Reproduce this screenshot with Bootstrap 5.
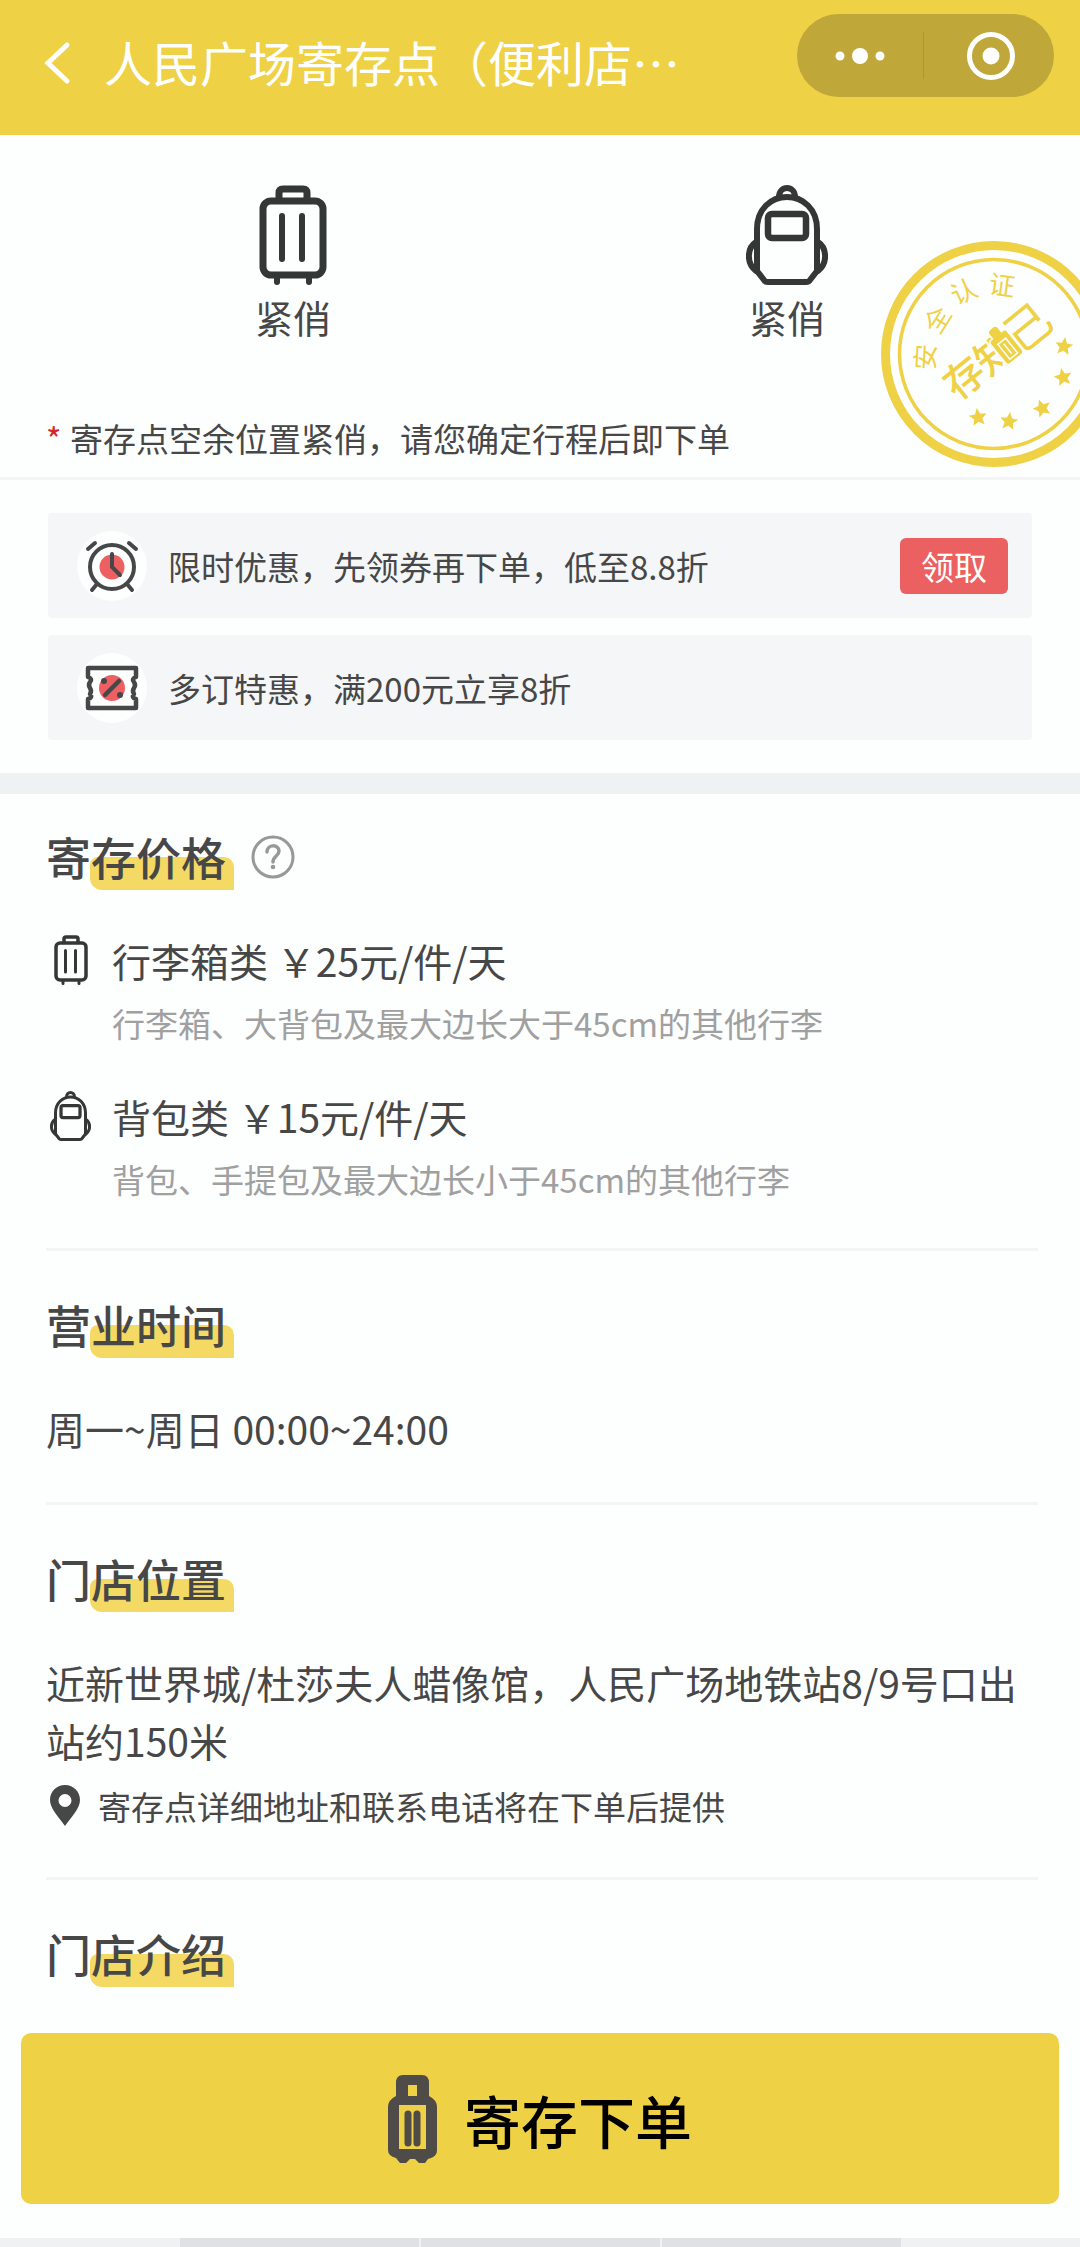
<!DOCTYPE html>
<html lang="zh-CN">
<head>
<meta charset="utf-8">
<meta name="viewport" content="width=device-width, initial-scale=1">
<title>人民广场寄存点</title>
<link rel="stylesheet" href="https://cdn.jsdelivr.net/npm/bootstrap@5.3.0/dist/css/bootstrap.min.css">
<style>
  :root { --brand: #efd145; --ink: #474747; --line: #f3f5f5; }
  body { font-family: "Noto Sans CJK SC", sans-serif; color: var(--ink); background: #fdfefe; font-size: 33px; line-height: 48px; overflow-x: hidden; }
  .topbar { background: var(--brand); height: 135px; padding: 0 26px 0 40px; }
  .topbar .page-name { font-size: 48px; line-height: 72px; font-weight: 400; padding-top: 25px; margin-left: 32px; }
  .back-link { padding-top: 40px; line-height: 0; }
  .capsule { background: #bfa73a; width: 257px; height: 83px; border-radius: 42px; margin-top: 14px; }
  .capsule button { flex: 1 1 0; border: 0; background: none; padding: 0; line-height: 0; }
  .capsule .split { width: 1px; height: 47px; background: #ad9735; }
  .stock { padding: 50px 46px 15px; border-bottom: 3px solid var(--line); }
  .stock-name { font-size: 38px; margin-top: 8px; }
  .stock-note { margin-top: 73px; }
  .stock-note .star-mark { color: #d8232a; width: 24px; }
  .stamp { position: absolute; right: -28px; top: 105px; }
  .offers { padding: 33px 48px; gap: 17px; }
  .offer { background: #f4f6f8; height: 105px; border-radius: 4px; padding: 0 24px 0 29px; }
  .offer-icon { width: 70px; height: 70px; background: #fdfefe; margin-right: 21px; }
  .claim { background: #eb6161; color: #fff; font-size: 33px; line-height: 48px; padding: 4px 21px; border: 0; border-radius: 6px; }
  .band { height: 21px; background: #eff2f2; }
  .block { margin: 0 42px 0 46px; padding: 50px 0 45px; border-bottom: 3px solid var(--line); }
  .block.first { padding-top: 39px; }
  .block.last { border-bottom: 0; }
  .block-name { font-size: 45px; line-height: 48px; font-weight: 500; margin: 0; position: relative; z-index: 0; padding-right: 8px; }
  .block-name::before { content: ""; position: absolute; z-index: -1; left: 44px; right: 0; top: 24px; height: 33px; background: #f4d964; border-radius: 8px 10px 0 12px; }
  .help { border: 0; background: none; padding: 0; margin-left: 17px; line-height: 0; }
  .kind { margin-top: 41px; }
  .kind.first { margin-top: 51px; }
  .kind-icon { width: 66px; padding-left: 3px; }
  .kind-name { font-size: 39px; line-height: 56px; }
  .kind-hint { color: #a0a0a0; margin: 11px 0 0 66px; }
  .body-text { font-size: 39px; line-height: 58px; margin: 50px 0 0; }
  .address-hint { margin-top: 13px; padding-bottom: 2px; }
  .order { background: var(--brand); color: #000; margin: 0 21px 34px; height: 171px; border: 0; border-radius: 10px; font-size: 57px; line-height: 84px; font-weight: 500; gap: 27px; }
  .strip { height: 9px; background: #eff1f3; gap: 2px; }
  .strip span { width: 239px; background: #dfe1e4; }
</style>
<script src="https://cdn.jsdelivr.net/npm/bootstrap@5.3.0/dist/js/bootstrap.bundle.min.js"></script>
</head>
<body class="min-vh-100 d-flex flex-column">

<svg width="0" height="0" class="position-absolute" aria-hidden="true">
  <symbol id="suitcase" viewBox="0 0 68 100">
    <g fill="none" stroke="#333735" stroke-linecap="round">
      <rect x="4" y="16" width="60" height="74" rx="8" stroke-width="7"/>
      <path d="M20 15V8q0-4 4-4h20q4 0 4 4v7" stroke-width="7"/>
      <path d="M23 31v43M43 31v43" stroke-width="6"/>
      <path d="M18 93v4M50 93v4" stroke-width="6"/>
    </g>
  </symbol>
  <symbol id="backpack" viewBox="0 0 82 100">
    <g fill="none" stroke="#333735" stroke-width="6" stroke-linecap="round" stroke-linejoin="round">
      <path d="M11 86V44C11 24 25 12 41 12s30 12 30 32v42l-7 9q-1 2-4 2H22q-3 0-4-2z"/>
      <path d="M33 12c0-12 16-12 16 0"/>
      <rect x="22" y="29" width="38" height="24" rx="4" stroke-width="6.500"/>
      <path d="M10 57C1 63 0 78 10 86M72 57c9 6 10 21 0 29"/>
    </g>
  </symbol>
  <symbol id="star" viewBox="-10 -10 20 20">
    <path d="M0-9 2.600-3 9-2.500 4.200 1.800 5.600 8 0 4.800-5.600 8-4.200 1.800-9-2.500-2.600-3z" fill="#efd145"/>
  </symbol>
</svg>

<header class="topbar d-flex align-items-start">
  <a href="#" class="back-link" aria-label="返回">
    <svg width="32" height="46" viewBox="0 0 32 46" fill="none" stroke="#fff" stroke-width="5" stroke-linecap="round"><path d="M27 5 8 23l19 18"/></svg>
  </a>
  <h1 class="page-name text-white text-nowrap mb-0 me-auto">人民广场寄存点（便利店…</h1>
  <div class="capsule d-flex align-items-center flex-shrink-0">
    <button type="button" aria-label="更多"><svg width="52" height="20" viewBox="0 0 52 20" fill="#fff"><circle cx="6" cy="10" r="4.500"/><circle cx="26" cy="10" r="8"/><circle cx="46" cy="10" r="4.500"/></svg></button>
    <span class="split"></span>
    <button type="button" class="ps-1" aria-label="关闭"><svg width="50" height="50" viewBox="0 0 50 50"><circle cx="25" cy="25" r="21.500" fill="none" stroke="#fff" stroke-width="5"/><circle cx="25" cy="25" r="8.500" fill="#fff"/></svg></button>
  </div>
</header>

<main>
  <section class="stock position-relative">
    <div class="row g-0 text-center">
      <div class="col">
        <svg class="d-block mx-auto" width="68" height="100"><use href="#suitcase"/></svg>
        <div class="stock-name">紧俏</div>
      </div>
      <div class="col">
        <svg class="d-block mx-auto" width="82" height="100"><use href="#backpack"/></svg>
        <div class="stock-name">紧俏</div>
      </div>
    </div>
    <p class="stock-note d-flex mb-0"><span class="star-mark">*</span>寄存点空余位置紧俏，请您确定行程后即下单</p>
    <svg class="stamp" width="228" height="228" viewBox="-114 -114 228 228" fill="#efd145" font-family="'Noto Sans CJK SC', sans-serif" text-anchor="middle">
      <circle r="108.500" fill="none" stroke="#efd145" stroke-width="9"/>
      <circle r="94.500" fill="none" stroke="#efd145" stroke-width="3.500"/>
      <g font-size="26">
        <text transform="translate(-68 3) rotate(-87)" y="9">安</text>
        <text transform="translate(-56 -34) rotate(-58)" y="9">全</text>
        <text transform="translate(-30 -62) rotate(-25)" y="9">认</text>
        <text transform="translate(8 -68) rotate(8)" y="9">证</text>
      </g>
      <g transform="rotate(-39)">
        <g font-size="40" font-weight="500">
          <text x="-38" y="14">存</text>
          <text x="1" y="15">知</text>
        </g>
        <path d="M4-9q0-3 3-3h2v-6q0-3 3-3h4q3 0 3 3v6h2q3 0 3 3v23q0 3-3 3H7q-3 0-3-3z" stroke="#fdfefe" stroke-width="3" paint-order="stroke"/>
        <path d="M9-5h10v19H9zM14-2v13" fill="none" stroke="#fdfefe" stroke-width="1.500"/>
        <text x="43" y="17" font-size="46" font-weight="400">己</text>
      </g>
      <use href="#star" x="60" y="-18" width="20" height="20" transform="rotate(8 70 -8)"/>
      <use href="#star" x="59" y="13" width="20" height="20" transform="rotate(-12 69 23)"/>
      <use href="#star" x="38" y="44" width="20" height="20" transform="rotate(-20 48 54)"/>
      <use href="#star" x="5" y="57" width="20" height="20" transform="rotate(8 15 67)"/>
      <use href="#star" x="-26" y="53" width="20" height="20" transform="rotate(-8 -16 63)"/>
    </svg>
  </section>

  <section class="offers d-flex flex-column">
    <div class="offer d-flex align-items-center">
      <span class="offer-icon rounded-circle d-flex align-items-center justify-content-center">
        <svg width="54" height="54" viewBox="0 0 54 54" fill="none" stroke="#454849" stroke-width="4" stroke-linecap="round">
          <circle cx="27" cy="28" r="12.500" fill="#ee5f62" stroke="none"/>
          <circle cx="27" cy="28" r="22"/>
          <path d="M27 15v13l8 8M3 10l7-6M44 4l7 6M12 45l-5 6M42 45l5 6"/>
        </svg>
      </span>
      <span class="me-auto">限时优惠，先领券再下单，低至8.8折</span>
      <button type="button" class="claim">领取</button>
    </div>
    <div class="offer d-flex align-items-center">
      <span class="offer-icon rounded-circle d-flex align-items-center justify-content-center">
        <svg width="54" height="46" viewBox="0 0 54 46" fill="none" stroke="#454849" stroke-width="4.500" stroke-linejoin="round" stroke-linecap="round">
          <path d="M3 3h48v9q-5 2-2 5 2 3 0 6 -2 3 0 6-3 4 2 5v9H3v-9q5-1 2-5 2-3 0-6-2-3 0-6 3-3-2-5z"/>
          <circle cx="27" cy="23" r="13" fill="#ee5f62" stroke="none"/>
          <path d="m20 30 14-14"/>
          <circle cx="19" cy="16" r="3" fill="#454849" stroke="none"/><circle cx="35" cy="30" r="3" fill="#454849" stroke="none"/>
        </svg>
      </span>
      <span>多订特惠，满200元立享8折</span>
    </div>
  </section>

  <div class="band"></div>

  <section class="block first">
    <div class="d-flex align-items-center">
      <h2 class="block-name">寄存价格</h2>
      <button type="button" class="help" aria-label="价格说明">
        <svg width="44" height="44" viewBox="0 0 44 44" fill="none" stroke="#989898" stroke-width="3" stroke-linecap="round"><circle cx="22" cy="22" r="20"/><path d="M16 17c0-8 12-8 12-1 0 5-6 5-6 11" stroke-width="3.500"/><circle cx="22" cy="32" r="2.300" fill="#989898" stroke="none"/></svg>
      </button>
    </div>
    <div class="kind first">
      <div class="kind-name d-flex align-items-center">
        <span class="kind-icon d-flex"><svg class="ms-1" width="36" height="50"><use href="#suitcase"/></svg></span>
        <span>行李箱类 ￥25元/件/天</span>
      </div>
      <p class="kind-hint mb-0">行李箱、大背包及最大边长大于45cm的其他行李</p>
    </div>
    <div class="kind">
      <div class="kind-name d-flex align-items-center">
        <span class="kind-icon d-flex"><svg width="43" height="50"><use href="#backpack"/></svg></span>
        <span>背包类 ￥15元/件/天</span>
      </div>
      <p class="kind-hint mb-0">背包、手提包及最大边长小于45cm的其他行李</p>
    </div>
  </section>

  <section class="block">
    <div class="d-flex"><h2 class="block-name">营业时间</h2></div>
    <p class="body-text">周一~周日 00:00~24:00</p>
  </section>

  <section class="block">
    <div class="d-flex"><h2 class="block-name">门店位置</h2></div>
    <p class="body-text">近新世界城/杜莎夫人蜡像馆，人民广场地铁站8/9号口出站约150米</p>
    <p class="address-hint d-flex align-items-center mb-0">
      <svg class="ms-1 me-3" width="32" height="42" viewBox="0 0 32 42"><path d="M15 0C6 0 0 7 0 15c0 9 9 17 15 26 6-9 15-17 15-26C30 7 24 0 15 0zm0 9a6.500 6.500 0 1 1 0 13 6.500 6.500 0 0 1 0-13z" fill="#474747"/></svg>
      <span>寄存点详细地址和联系电话将在下单后提供</span>
    </p>
  </section>

  <section class="block last">
    <div class="d-flex"><h2 class="block-name">门店介绍</h2></div>
  </section>
</main>

<footer class="mt-auto d-flex flex-column">
  <button type="button" class="order d-flex align-items-center justify-content-center">
    <svg width="49" height="88" viewBox="0 0 49 88"><path fill="#4e4b48" fill-rule="evenodd" d="M15 0h19q7 0 7 8v13q8 4 8 11v43q0 6-6 8l-3 1-3 4h-6l-4-4h-5l-4 4h-6l-4-5q-8-2-8-8V32q0-7 8-11V8q0-8 7-8zM20 10v11h9V10zM11 30v44h27V30z"/><path stroke="#4e4b48" stroke-width="7" stroke-linecap="round" d="M20 39v29M29 39v29"/></svg>
    <span>寄存下单</span>
  </button>
  <div class="strip d-flex justify-content-center"><span></span><span></span><span></span></div>
</footer>
</body>
</html>
